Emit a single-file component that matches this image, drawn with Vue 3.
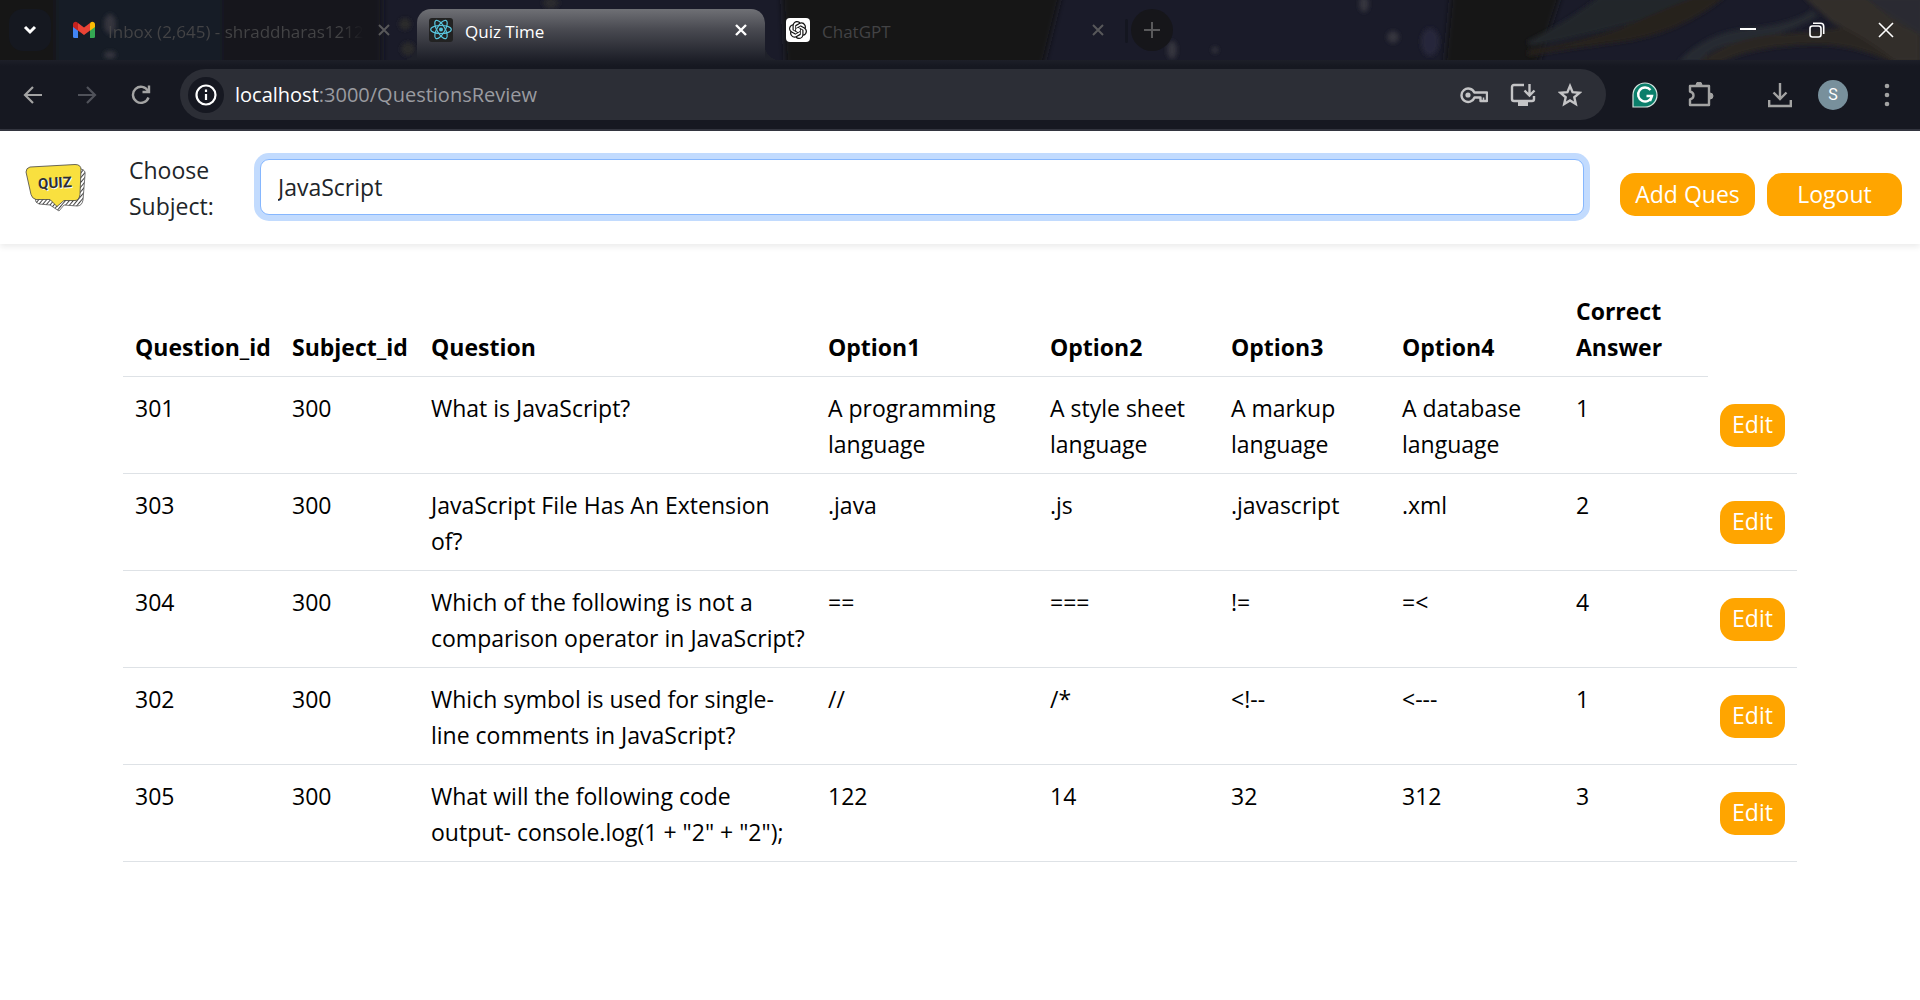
<script setup>
import { ref } from 'vue'

const subject = ref('JavaScript')
const subjects = ['JavaScript']

const headings = ['Question_id', 'Subject_id', 'Question', 'Option1', 'Option2', 'Option3', 'Option4', 'Correct Answer']

const questions = [
  { id: 301, subjectId: 300, text: 'What is JavaScript?', options: ['A programming language', 'A style sheet language', 'A markup language', 'A database language'], answer: 1 },
  { id: 303, subjectId: 300, text: 'JavaScript File Has An Extension of?', options: ['.java', '.js', '.javascript', '.xml'], answer: 2 },
  { id: 304, subjectId: 300, text: 'Which of the following is not a comparison operator in JavaScript?', options: ['==', '===', '!=', '=<'], answer: 4 },
  { id: 302, subjectId: 300, text: 'Which symbol is used for single-line comments in JavaScript?', options: ['//', '/*', '<!--', '<---'], answer: 1 },
  { id: 305, subjectId: 300, text: 'What will the following code output- console.log(1 + "2" + "2");', options: ['122', '14', '32', '312'], answer: 3 },
]
</script>

<template>
  <div class="page">
    <header class="browser">
      <div class="strip">
        <svg class="theme" viewBox="0 0 1920 60" preserveAspectRatio="none" aria-hidden="true">
          <defs>
            <filter id="soft" x="-20%" y="-20%" width="140%" height="140%"><feGaussianBlur stdDeviation="3" /></filter>
            <filter id="fine" x="-20%" y="-50%" width="140%" height="200%"><feGaussianBlur stdDeviation="2" /></filter>
          </defs>
          <rect width="1920" height="60" fill="#1a1b29" />
          <g filter="url(#soft)">
            <rect x="-20" y="-10" width="76" height="80" fill="#131416" />
            <rect x="56" y="-10" width="166" height="80" fill="#191b28" />
            <rect x="222" y="-10" width="160" height="80" fill="#15161b" />
            <path d="M782-10h280l-20 80H786z" fill="#131415" />
            <path d="M1452-10h110l-26 80h-92z" fill="#151619" />
            <path d="M1850-10h80v80h-30z" fill="#2a2929" />
          </g>
          <g filter="url(#fine)">
            <path d="M1526 42Q1570 20 1600-4H1710L1660 14Q1600 34 1532 46z" fill="#22252b" />
            <path d="M1528 50Q1600 38 1640 20T1700-4H1726Q1680 34 1620 42T1528 56z" fill="#28221f" />
            <path d="M1678 62Q1706 32 1750 28T1812 10L1818 16Q1790 34 1750 40T1700 62z" fill="#282b33" />
            <path d="M1698 62Q1730 38 1780 34T1850 26L1920 62H1890Q1850 42 1800 45T1722 62z" fill="#2c2622" />
            <path d="M1802-4H1866Q1890 20 1920 34V62H1896Q1860 34 1834 24z" fill="#332d2b" />
            <path d="M1864-4H1924V36Q1892 20 1864-4z" fill="#292c31" />
          </g>
          <g filter="url(#fine)" fill="#34353c">
            <ellipse cx="110" cy="24" rx="6" ry="10" />
            <ellipse cx="110" cy="55" rx="6" ry="4" />
            <circle cx="405" cy="24" r="6" fill="#29292a" />
            <circle cx="408" cy="49" r="7" fill="#29292a" />
            <ellipse cx="551" cy="3" rx="8" ry="6" fill="#29292d" />
            <ellipse cx="1172" cy="50" rx="5" ry="9" />
            <circle cx="1215" cy="50" r="3" />
            <ellipse cx="1364" cy="4" rx="5" ry="8" />
            <circle cx="1393" cy="37" r="6" />
            <ellipse cx="1430" cy="42" rx="9" ry="14" fill="#27263a" />
          </g>
        </svg>

        <button class="tab-search" aria-label="Search tabs">
          <svg width="14" height="10" viewBox="0 0 14 10" fill="none" stroke="#fff" stroke-width="3"><path d="M2 2l5 5 5-5" /></svg>
        </button>

        <div class="tab first">
          <svg class="favicon" viewBox="0 0 24 24">
            <path d="M1 8v10.500q0 1.500 1.500 1.500H6V11z" fill="#4285f4" />
            <path d="M23 8v10.500q0 1.500-1.500 1.500H18V11z" fill="#34a853" />
            <path d="M6 5.500v7.200L1 9V6.500C1 4 3.800 3 5.500 4.500z" fill="#c5221f" />
            <path d="M18 5.500v7.200L23 9V6.500C23 4 20.200 3 18.500 4.500z" fill="#fbbc04" />
            <path d="M6 5l6 4.500L18 5v7.500L12 17l-6-4.500z" fill="#ea4335" />
          </svg>
          <span class="title fade">Inbox (2,645) - shraddharas1212</span>
          <button class="close" aria-label="Close tab"><svg width="14" height="14" viewBox="0 0 14 14" stroke="currentColor" stroke-width="2"><path d="M2 2l10 10M12 2L2 12" /></svg></button>
        </div>

        <div class="tab active">
          <svg class="favicon" viewBox="0 0 24 24">
            <rect width="24" height="24" rx="3" fill="#222" />
            <g fill="none" stroke="#58c4dc" stroke-width="1.200">
              <ellipse cx="12" cy="11.500" rx="10.300" ry="4" />
              <ellipse cx="12" cy="11.500" rx="10.300" ry="4" transform="rotate(60 12 11.500)" />
              <ellipse cx="12" cy="11.500" rx="10.300" ry="4" transform="rotate(120 12 11.500)" />
            </g>
            <circle cx="12" cy="11.500" r="2" fill="#58c4dc" />
          </svg>
          <span class="title">Quiz Time</span>
          <button class="close" aria-label="Close tab"><svg width="14" height="14" viewBox="0 0 14 14" stroke="currentColor" stroke-width="2.400"><path d="M2 2l10 10M12 2L2 12" /></svg></button>
        </div>

        <div class="tab">
          <svg class="favicon" viewBox="0 0 24 24">
            <rect width="24" height="24" rx="4" fill="#fff" />
            <g transform="translate(3 3) scale(.75)" fill="#111">
              <path d="M22.282 9.821a5.985 5.985 0 0 0-.516-4.910 6.046 6.046 0 0 0-6.510-2.900A6.065 6.065 0 0 0 4.981 4.182a5.985 5.985 0 0 0-3.998 2.900 6.046 6.046 0 0 0 .743 7.097 5.980 5.980 0 0 0 .511 4.911 6.051 6.051 0 0 0 6.515 2.900A5.985 5.985 0 0 0 13.260 24a6.056 6.056 0 0 0 5.772-4.206 5.990 5.990 0 0 0 3.998-2.900 6.056 6.056 0 0 0-.748-7.073zM13.260 22.430a4.476 4.476 0 0 1-2.876-1.041l.142-.080 4.778-2.758a.795.795 0 0 0 .393-.681v-6.737l2.020 1.169a.071.071 0 0 1 .038.052v5.583a4.504 4.504 0 0 1-4.495 4.493zM3.600 18.304a4.471 4.471 0 0 1-.535-3.014l.142.085 4.783 2.759a.771.771 0 0 0 .781 0l5.843-3.369v2.332a.080.080 0 0 1-.033.062L9.740 19.950a4.499 4.499 0 0 1-6.140-1.646zM2.341 7.896a4.485 4.485 0 0 1 2.366-1.973v5.677a.766.766 0 0 0 .388.677l5.815 3.354-2.021 1.169a.076.076 0 0 1-.071 0l-4.830-2.787A4.504 4.504 0 0 1 2.341 7.872zm16.597 3.856l-5.833-3.388 2.015-1.163a.076.076 0 0 1 .071 0l4.830 2.791a4.494 4.494 0 0 1-.676 8.105v-5.678a.790.790 0 0 0-.407-.667zm2.010-3.024l-.142-.085-4.774-2.782a.776.776 0 0 0-.785 0L9.409 9.230V6.897a.066.066 0 0 1 .028-.061l4.830-2.787a4.499 4.499 0 0 1 6.681 4.660zM8.307 12.863l-2.020-1.164a.080.080 0 0 1-.038-.057V6.074a4.499 4.499 0 0 1 7.376-3.453l-.142.080-4.779 2.759a.795.795 0 0 0-.392.681zm1.097-2.365l2.602-1.500 2.607 1.500v2.999l-2.597 1.500-2.607-1.500z" />
            </g>
          </svg>
          <span class="title">ChatGPT</span>
          <button class="close" aria-label="Close tab"><svg width="14" height="14" viewBox="0 0 14 14" stroke="currentColor" stroke-width="2"><path d="M2 2l10 10M12 2L2 12" /></svg></button>
        </div>
        <span class="divider"></span>
        <button class="new-tab" aria-label="New tab"><svg width="16" height="16" viewBox="0 0 16 16" stroke="#59595b" stroke-width="2"><path d="M8 0v16M0 8h16" /></svg></button>

        <div class="window-controls">
          <button aria-label="Minimize"><svg width="16" height="16" viewBox="0 0 16 16" stroke="#fff" stroke-width="2"><path d="M0 7h16" /></svg></button>
          <button aria-label="Restore"><svg width="16" height="16" viewBox="0 0 16 16" fill="none" stroke="#fff" stroke-width="1.600"><rect x="1" y="4" width="11" height="11" rx="2.500" /><path d="M4 1.300h7.500q3.200 0 3.200 3.200V12" /></svg></button>
          <button aria-label="Close window"><svg width="16" height="16" viewBox="0 0 16 16" stroke="#fff" stroke-width="1.600"><path d="M1 1l14 14M15 1L1 15" /></svg></button>
        </div>
      </div>

      <div class="toolbar">
        <nav class="history" aria-label="History">
          <button aria-label="Back"><svg width="20" height="20" viewBox="0 0 20 20" fill="none" stroke="#a3a3a3" stroke-width="2.200"><path d="M19 10H2M10 2l-8 8 8 8" /></svg></button>
          <button aria-label="Forward"><svg width="20" height="20" viewBox="0 0 20 20" fill="none" stroke="#50525a" stroke-width="2.200"><path d="M1 10h17M10 2l8 8-8 8" /></svg></button>
          <button aria-label="Reload"><svg width="20" height="20" viewBox="0 0 20 20" fill="none" stroke="#a3a3a3" stroke-width="2.400"><path d="M17.500 12.500A8 8 0 1 1 17 6" /><path d="M18 .500V7h-6.500" /></svg></button>
        </nav>
        <div class="omnibox">
          <span class="site-info"><svg width="22" height="22" viewBox="0 0 22 22" fill="none" stroke="#fff" stroke-width="2.200"><circle cx="11" cy="11" r="9.500" /><path d="M11 10v6M11 5.500v2.400" /></svg></span>
          <span class="url"><b>localhost</b>:3000/QuestionsReview</span>
          <button aria-label="Passwords"><svg width="28" height="24" viewBox="0 0 28 24" fill="none" stroke="#c4c4c6" stroke-width="2.400"><path d="M14.300 9.500H27V18h-6.500v-3.500h-6A6.700 6.700 0 1 1 14.300 9.500z" stroke-linejoin="round" /><circle cx="8" cy="12" r="2.600" fill="#c4c4c6" stroke="none" /><path d="M23.500 14.500V18" stroke-width="1.600" /></svg></button>
          <button aria-label="Install"><svg width="26" height="24" viewBox="0 0 26 24" fill="none" stroke="#c4c4c6" stroke-width="2.400"><path d="M14 2H4Q2 2 2 4v12q0 2 2 2h18q2 0 2-2v-3M19.500 1v11M14.500 7.500l5 5 5-5" /><path d="M8 18.500h10V23H8z" fill="#c4c4c6" stroke="none" /></svg></button>
          <button aria-label="Bookmark"><svg width="24" height="24" viewBox="0 0 24 24" fill="none" stroke="#c4c4c6" stroke-width="2.400"><path d="M12 3l2.600 6.200 6.900.600-5.200 4.500 1.500 6.700-5.800-3.500L6.200 21l1.500-6.700-5.200-4.500 6.900-.600z" /></svg></button>
        </div>
        <button class="tool grammar" aria-label="Grammarly"><svg width="26" height="26" viewBox="0 0 26 26"><path d="M1 25V13A12 12 0 1 1 13 25z" fill="#0b7f6b" stroke="#d5e3df" stroke-width="1.200" /><path d="M18.500 8A7 7 0 1 0 20 14h-5.500M20 14l-2 5" fill="none" stroke="#fff" stroke-width="2.400" /></svg></button>
        <button class="tool extensions" aria-label="Extensions"><svg width="26" height="26" viewBox="0 0 26 26" fill="none" stroke="#a3a3a3" stroke-width="2.400" stroke-linejoin="round"><path d="M2 4h19v19H2v-5.500q3.500-1 3.500-4T2 9.500z" /><path d="M8 3a3 3 0 0 1 6 0zM22 11a3 3 0 0 1 0 6z" fill="#a3a3a3" stroke-width="1" /></svg></button>
        <button class="tool downloads" aria-label="Downloads"><svg width="24" height="26" viewBox="0 0 24 26" fill="none" stroke="#a3a3a3" stroke-width="2.400"><path d="M12 1v16M5.500 10.500L12 17l6.500-6.500M1.200 18v6h21.600v-6" /></svg></button>
        <button class="tool avatar" aria-label="Profile">S</button>
        <button class="tool menu" aria-label="Menu"><svg width="6" height="24" viewBox="0 0 6 24" fill="#a3a3a3"><circle cx="3" cy="3" r="2.300" /><circle cx="3" cy="12" r="2.300" /><circle cx="3" cy="21" r="2.300" /></svg></button>
      </div>
    </header>

    <nav class="navbar">
      <svg class="logo" width="62" height="48" viewBox="0 0 62 48" role="img" aria-label="Quiz">
        <defs>
          <pattern id="hatch" width="3" height="3" patternUnits="userSpaceOnUse" patternTransform="rotate(40)"><rect width="3" height="3" fill="#fff" /><rect width="1" height="3" fill="#444" /></pattern>
        </defs>
        <path d="M12 10L56 5q5 1 4 6l-2 25q-1 6-6 6l-13-1-5 6-9-6-11-1q-4-1-4-6z" fill="url(#hatch)" stroke="#555" stroke-width=".800" />
        <path d="M5 3L50 0.500q6 0 6 5l-1 25q-1 6-5 6l-11 0-7 6-7-7-14 0q-4-1-5-5L1 8q0-4 4-5z" fill="#f9e03f" stroke="#444" stroke-width=".800" />
        <g transform="rotate(-3 30 20)">
          <text x="31" y="25" text-anchor="middle" class="logo-shadow">QUIZ</text>
          <text x="30" y="24" text-anchor="middle" class="logo-text">QUIZ</text>
        </g>
      </svg>
      <label class="subject-label" for="subject">Choose Subject:</label>
      <select id="subject" v-model="subject" class="subject">
        <option v-for="s in subjects" :key="s">{{ s }}</option>
      </select>
      <div class="actions">
        <button class="btn wide">Add Ques</button>
        <button class="btn wide">Logout</button>
      </div>
    </nav>

    <main class="content">
      <table class="questions">
        <colgroup>
          <col class="c-id" /><col class="c-subject" /><col class="c-question" /><col class="c-one" /><col class="c-two" /><col class="c-three" /><col class="c-four" /><col class="c-answer" /><col class="c-edit" />
        </colgroup>
        <thead>
          <tr><th v-for="h in headings" :key="h" scope="col">{{ h }}</th></tr>
        </thead>
        <tbody>
          <tr v-for="q in questions" :key="q.id">
            <td>{{ q.id }}</td>
            <td>{{ q.subjectId }}</td>
            <td class="question">{{ q.text }}</td>
            <td v-for="(o, i) in q.options" :key="i">{{ o }}</td>
            <td>{{ q.answer }}</td>
            <td class="edit-cell"><button class="btn">Edit</button></td>
          </tr>
        </tbody>
      </table>
    </main>
  </div>
</template>

<style>
body {
  background: #fff;
}
</style>

<style scoped>
.page {
  font-family: "Open Sans", "Noto Sans", sans-serif;
  font-size: 23px;
  line-height: 36px;
  color: #212529;
}
button {
  margin: 0;
  padding: 0;
  border: 0;
  background: none;
  font-family: inherit;
  font-size: inherit;
  cursor: pointer;
}
svg {
  display: block;
  flex: none;
}

/* tab strip */
.strip {
  position: relative;
  display: flex;
  height: 60px;
  background: #1a1b29;
}
.strip > * {
  position: relative;
}
.strip .theme {
  position: absolute;
  inset: 0;
  width: 100%;
  height: 100%;
}
.tab-search {
  display: flex;
  align-items: center;
  justify-content: center;
  flex: none;
  width: 42px;
  height: 42px;
  margin: 9px 6px 0 9px;
  border-radius: 14px;
  background: #151820;
}
.tab {
  display: flex;
  align-items: center;
  flex: 0 1 348px;
  min-width: 0;
  box-sizing: border-box;
  height: 42px;
  margin-top: 9px;
  padding: 0 8px 0 21px;
  color: #434345;
  font-size: 17px;
  line-height: 24px;
}
.tab.first {
  flex-basis: 360px;
  padding: 0 26px 0 15px;
}
.tab.active {
  height: 51px;
  padding: 0 17px 9px 12px;
  border-radius: 14px 14px 0 0;
  background: linear-gradient(#6f7075, #494a51 40%, #1d1f28);
  color: #fff;
}
.tab.active::before,
.tab.active::after {
  content: "";
  position: absolute;
  bottom: 0;
  width: 14px;
  height: 14px;
}
.tab.active::before {
  right: 100%;
  background: radial-gradient(circle at 0 0, transparent 14px, #1f212a 14px);
}
.tab.active::after {
  left: 100%;
  background: radial-gradient(circle at 100% 0, transparent 14px, #1f212a 14px);
}
.favicon {
  width: 24px;
  height: 24px;
  margin-right: 12px;
}
.title {
  flex: 1;
  min-width: 0;
  overflow: hidden;
  white-space: nowrap;
  margin-top: 3px;
}
.tab .fade {
  mask-image: linear-gradient(90deg, #000 86%, transparent 95%);
}
.close {
  color: #58585a;
}
.active .close {
  color: #fff;
}
.divider {
  flex: none;
  width: 3px;
  height: 24px;
  margin: 19px 3px 0 12px;
  border-radius: 2px;
  background: #141620;
}
.new-tab {
  display: flex;
  align-items: center;
  justify-content: center;
  flex: none;
  width: 42px;
  height: 42px;
  margin-top: 9px;
  border-radius: 50%;
  background: #16161a;
}
.window-controls {
  display: flex;
  align-items: center;
  gap: 53px;
  height: 60px;
  margin-left: auto;
  padding-right: 26px;
}

/* toolbar */
.toolbar {
  display: flex;
  align-items: center;
  height: 69px;
  padding-right: 30px;
  background: linear-gradient(#1d1f28, #161821 6px);
  border-bottom: 2px solid #343640;
}
.history {
  display: flex;
  gap: 34px;
  padding: 0 29px 0 23px;
}
.omnibox {
  display: flex;
  align-items: center;
  flex: 1;
  min-width: 0;
  box-sizing: border-box;
  height: 51px;
  padding: 0 24px 0 8px;
  gap: 22px;
  border-radius: 26px;
  background: #2c2e36;
}
.site-info {
  display: flex;
  align-items: center;
  justify-content: center;
  flex: none;
  width: 36px;
  height: 36px;
  border-radius: 50%;
  background: #161821;
}
.url {
  flex: 1;
  margin-left: -11px;
  color: #9a9ba0;
  font-size: 20px;
  line-height: 28px;
}
.url b {
  color: #fff;
  font-weight: 400;
}
.tool {
  margin-left: 26px;
}
.extensions {
  margin-left: 30px;
}
.downloads {
  margin-left: 54px;
}
.avatar {
  width: 30px;
  height: 30px;
  border-radius: 50%;
  background: #78909c;
  color: #fff;
  font-family: Roboto, sans-serif;
  font-size: 16px;
  line-height: 30px;
}
.menu {
  margin-left: 36px;
}

/* page navigation */
.navbar {
  display: flex;
  align-items: center;
  min-height: 113px;
  padding: 0 18px 0 25px;
  box-shadow: 0 3px 6px rgba(0, 0, 0, 0.08);
}
.logo-text,
.logo-shadow {
  font-family: Roboto, sans-serif;
  font-size: 15px;
  font-weight: 700;
  fill: #2c2f33;
}
.logo-shadow {
  fill: #fff;
}
.subject-label {
  flex: none;
  width: 107px;
  margin: 0 24px 0 42px;
}
.subject {
  flex: 1;
  min-width: 0;
  height: 56px;
  margin: 0 0 2px;
  padding: 0 17px;
  appearance: none;
  border: 1px solid #86b7fe;
  border-radius: 9px;
  outline: 0;
  background: #fff;
  box-shadow: 0 0 0 6px #c2dbfe;
  color: #212529;
  font-family: inherit;
  font-size: 23px;
}
.actions {
  display: flex;
  gap: 12px;
  margin: 14px 0 0 36px;
}
.btn {
  height: 43px;
  padding: 0 0 2px;
  border-radius: 15px;
  background: orange;
  color: #fff;
}
.wide {
  width: 135px;
}

/* question table */
.content {
  padding: 36px 123px;
}
.questions {
  width: 100%;
  table-layout: fixed;
  border-collapse: separate;
  border-spacing: 0;
  color: #000;
}
.c-id { width: 157px; }
.c-subject { width: 139px; }
.c-question { width: 397px; }
.c-one { width: 222px; }
.c-two { width: 181px; }
.c-three { width: 171px; }
.c-four { width: 174px; }
.c-answer { width: 144px; }
.c-edit { width: 89px; }
.questions th,
.questions td {
  padding: 13px 12px 11px;
  border-bottom: 1px solid #dee2e6;
  text-align: left;
  vertical-align: top;
}
.questions th {
  vertical-align: bottom;
  font-weight: 700;
}
.questions .question {
  padding-right: 10px;
}
.questions .edit-cell {
  padding: 12px;
  vertical-align: middle;
}
.edit-cell .btn {
  display: block;
  width: 100%;
}
</style>
